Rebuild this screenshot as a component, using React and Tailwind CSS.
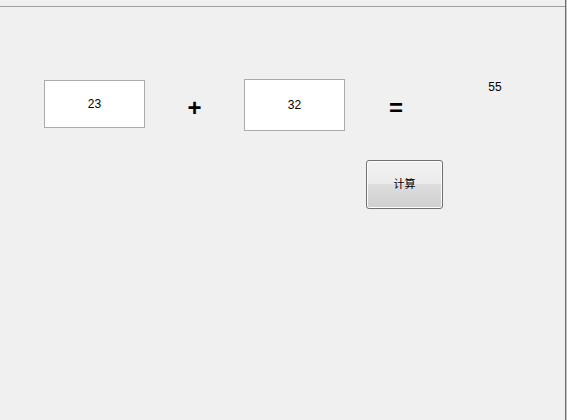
import { useState } from "react";

function NumberBox({ value, onChange, className }) {
  return (
    <input
      value={value}
      onChange={(e) => onChange(e.target.value)}
      className={`border border-[#ababab] bg-white text-center text-[12px] text-black outline-none ${className}`}
    />
  );
}

function App() {
  const [a, setA] = useState("23");
  const [b, setB] = useState("32");
  const [result, setResult] = useState("55");

  const calc = () => {
    const sum = Number(a) + Number(b);
    setResult(Number.isNaN(sum) ? "" : String(sum));
  };

  return (
    <div className="flex h-[420px] w-[567px] overflow-hidden bg-[#f0f0f0] font-['Liberation_Sans','Noto_Sans_CJK_SC',sans-serif] text-black">
      <div className="flex w-[565px] flex-col">
        <div className="h-[6px]" />
        <div className="h-px bg-[#a0a0a0]" />

        {/* operands row */}
        <div className="flex items-start pt-[72px]">
          <NumberBox value={a} onChange={setA} className="ml-[44px] mt-[1px] h-[48px] w-[101px]" />
          <div className="flex h-[52px] w-[99px] items-center justify-center pt-[6px] text-[24px] font-bold leading-none">
            +
          </div>
          <NumberBox value={b} onChange={setB} className="h-[52px] w-[101px]" />
          <div className="flex h-[52px] w-[102px] items-center justify-center pt-[6px] text-[24px] font-bold leading-none">
            =
          </div>
          <div className="mt-[1px] w-[96px] text-center text-[12px] leading-[14px]">{result}</div>
        </div>

        <div className="pl-[366px] pt-[29px]">
          <button
            onClick={calc}
            className="flex h-[49px] w-[77px] items-center justify-center rounded-[3px] border border-[#707070] bg-[linear-gradient(to_bottom,#f2f2f2_0%,#ebebeb_50%,#dddddd_50%,#cfcfcf_100%)] text-[11px] shadow-[inset_0_0_0_1px_#fcfcfc]"
          >
            计算
          </button>
        </div>
      </div>
      <div className="w-px bg-[#6e6e6e]" />
      <div className="w-px bg-[#c4c4c4]" />
    </div>
  );
}

export default App;
